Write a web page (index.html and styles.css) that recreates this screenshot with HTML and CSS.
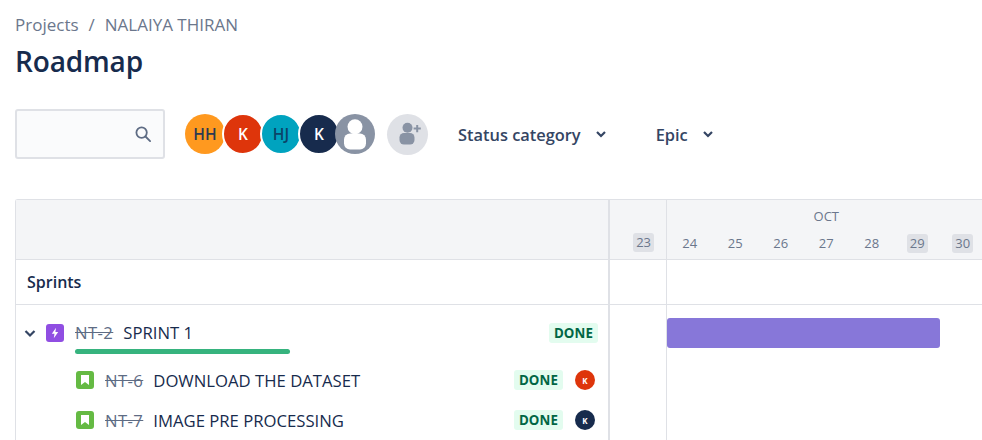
FILE: index.html
```html
<!DOCTYPE html>
<html lang="en">
<head>
<meta charset="utf-8">
<title>Roadmap</title>
<link rel="stylesheet" href="styles.css">
</head>
<body>
<main class="page">
  <nav class="crumbs"><span>Projects</span><span class="slash">/</span><span>NALAIYA THIRAN</span></nav>
  <h1 class="title">Roadmap</h1>
  <div class="toolbar">
    <div class="search">
      <svg class="search-icon" width="18" height="18" viewBox="0 0 18 18" fill="none" stroke="#5e6c84" stroke-width="1.8"><circle cx="7.6" cy="7.6" r="5.2"/><path d="M11.5 11.5l4.6 4.6" stroke-linecap="round"/></svg>
    </div>
    <div class="avatars">
      <span class="av av-hh">HH</span>
      <span class="av av-k1">K</span>
      <span class="av av-hj">HJ</span>
      <span class="av av-k2">K</span>
      <span class="av av-none">
        <svg width="40" height="40" viewBox="0 0 40 40"><circle cx="20" cy="20" r="20" fill="#8993a4"/><circle cx="20" cy="12.800" r="7.500" fill="#fff"/><rect x="9" y="19.500" width="22" height="16" rx="6" fill="#fff"/></svg>
      </span>
    </div>
    <span class="add">
      <svg width="30" height="30" viewBox="0 0 30 30" fill="#8993a4"><circle cx="14.500" cy="8.700" r="5"/><rect x="6.500" y="14" width="15" height="11.500" rx="4.500"/><path d="M23.200 6h2v2.600h2.600v2h-2.600v2.600h-2v-2.600h-2.600v-2h2.600z"/></svg>
    </span>
    <button class="filter">Status category<svg class="chev" width="12" height="12" viewBox="0 0 12 12" fill="none" stroke="#344563" stroke-width="2.200"><path d="M2 4l4 4 4-4"/></svg></button>
    <button class="filter filter-epic">Epic<svg class="chev" width="12" height="12" viewBox="0 0 12 12" fill="none" stroke="#344563" stroke-width="2.200"><path d="M2 4l4 4 4-4"/></svg></button>
  </div>
  <section class="chart">
    <div class="side">
      <div class="side-head"></div>
      <div class="sprints">Sprints</div>
      <div class="row row-epic">
        <svg class="chev-row" width="12" height="12" viewBox="0 0 12 12" fill="none" stroke="#344563" stroke-width="2.200"><path d="M1.500 4l4.500 4.500L10.500 4"/></svg>
        <svg class="type" width="18" height="18" viewBox="0 0 18 18"><rect width="18" height="18" rx="3" fill="#904ee2"/><path d="M10 3.800L5.800 9.800h2.700L7.800 14.200l4.400-6.200H9.400z" fill="#fff"/></svg>
        <div class="epic-main">
          <div class="label"><s class="key">NT-2</s><span class="name">SPRINT 1</span></div>
          <div class="progress"></div>
        </div>
        <span class="lozenge">DONE</span>
      </div>
      <div class="row row-story">
        <svg class="type" width="18" height="18" viewBox="0 0 18 18"><rect width="18" height="18" rx="3" fill="#65ba43"/><path d="M5 4h8v10l-4-3-4 3z" fill="#fff"/></svg>
        <div class="label"><s class="key">NT-6</s><span class="name">DOWNLOAD THE DATASET</span></div>
        <span class="lozenge">DONE</span>
        <span class="mini mini-red">K</span>
      </div>
      <div class="row row-story">
        <svg class="type" width="18" height="18" viewBox="0 0 18 18"><rect width="18" height="18" rx="3" fill="#65ba43"/><path d="M5 4h8v10l-4-3-4 3z" fill="#fff"/></svg>
        <div class="label"><s class="key">NT-7</s><span class="name">IMAGE PRE PROCESSING</span></div>
        <span class="lozenge">DONE</span>
        <span class="mini mini-navy">K</span>
      </div>
    </div>
    <div class="time">
      <div class="time-head">
        <div class="col-prev"><span class="day day-mark">23</span></div>
        <div class="month">
          <div class="month-name">OCT</div>
          <div class="days">
            <span class="day">24</span><span class="day">25</span><span class="day">26</span><span class="day">27</span><span class="day">28</span><span class="day day-mark">29</span><span class="day day-mark">30</span>
          </div>
        </div>
      </div>
      <div class="time-body">
        <div class="col-blank"></div>
        <div class="track">
          <div class="track-top"></div>
          <div class="bar"></div>
        </div>
      </div>
    </div>
  </section>
</main>
</body>
</html>
```
FILE: styles.css
```css
* { box-sizing: border-box; }
html, body { margin: 0; height: 440px; overflow: hidden; background: #fff; }
body { font-family: "Open Sans", "Noto Sans", "Liberation Sans", sans-serif; color: #172b4d; }
.page { padding: 12px 0 0 15px; width: 982px; }

.crumbs { display: flex; height: 24px; align-items: center; font-size: 17px; color: #6b778c; }
.slash { margin: 0 10px; }
.title { margin: 5px 0 0; font-size: 28px; line-height: 40px; font-weight: 600; color: #172b4d; letter-spacing: -0.15px; }

.toolbar { display: flex; align-items: center; margin-top: 28px; height: 50px; }
.search { width: 150px; height: 50px; background: #fafbfc; border: 2px solid #dfe1e6; border-radius: 3px; display: flex; align-items: center; justify-content: flex-end; padding-right: 11px; }
.avatars { display: flex; margin-left: 20px; }
.av { width: 40px; height: 40px; border-radius: 50%; display: flex; align-items: center; justify-content: center; font-size: 15.500px; font-weight: 600; color: #fff; flex: none; margin-right: -2px; outline: 2px solid #fff; outline-offset: -1px; }
.av-hh { background: #ff991f; color: #2c3a52; outline: none; }
.av-k1 { background: #de350b; }
.av-hj { background: #00a3bf; color: #0b4468; }
.av-k2 { background: #172b4d; }
.av-none { background: none; margin-left: -2px; margin-right: 0; outline: none; }
.av svg { display: block; }
.add { width: 41px; height: 41px; border-radius: 50%; background: #dfe1e6; margin-left: 12px; display: flex; align-items: center; justify-content: center; }
.filter { border: 0; background: none; padding: 0; margin-left: 30px; font: 600 16.400px "Open Sans", "Noto Sans", sans-serif; color: #344563; display: flex; align-items: center; gap: 14px; }
.filter-epic { margin-left: 49px; }

.chart { display: flex; margin-top: 40px; border-top: 1px solid #dfe1e6; border-left: 1px solid #dfe1e6; border-radius: 3px 0 0 0; height: 241px; }
.side { width: 594px; flex: none; border-right: 2px solid #dfe1e6; }
.side-head { height: 60px; background: #f4f5f7; border-bottom: 1px solid #dfe1e6; }
.sprints { height: 45px; border-bottom: 1px solid #dfe1e6; padding-left: 11px; display: flex; align-items: center; font-size: 16px; font-weight: 600; color: #172b4d; }
.row { display: flex; align-items: center; padding-right: 13px; }
.row-epic { height: 60px; padding-left: 8px; padding-bottom: 4px; padding-right: 10px; }
.chev-row { margin-right: 10px; flex: none; }
.type { flex: none; }
.epic-main { margin-left: 11px; flex: 1; align-self: flex-start; padding-top: 17px; }
.label { display: flex; align-items: center; font-size: 16.700px; line-height: 22px; color: #172b4d; white-space: nowrap; }
.key { color: #5e6c84; margin-right: 10px; letter-spacing: 0.4px; }
.progress { width: 215px; height: 5px; background: #36b37e; border-radius: 3px; margin-top: 5px; }
.lozenge { background: #e3fcef; color: #006644; font-size: 13.300px; font-weight: 700; line-height: 20px; padding: 0 5px; border-radius: 3px; letter-spacing: 0.1px; }
.row-story { height: 40px; padding-left: 60px; margin-top: -5px; }
.row-story + .row-story { margin-top: 0; }
.row-story .label { margin-left: 11px; flex: 1; padding-top: 2px; }
.mini { width: 20px; height: 20px; border-radius: 50%; color: #fff; font-size: 8px; font-weight: 700; display: flex; align-items: center; justify-content: center; margin-left: 12px; flex: none; }
.mini-red { background: #de350b; }
.mini-navy { background: #172b4d; }

.time { flex: 1; min-width: 0; }
.time-head { display: flex; height: 60px; background: #f4f5f7; border-bottom: 1px solid #dfe1e6; }
.col-prev { width: 57px; flex: none; display: flex; justify-content: flex-end; align-items: flex-end; padding: 0 12px 7px 0; border-right: 1px solid #dfe1e6; }
.month { flex: 1; min-width: 0; }
.month-name { width: 318.500px; text-align: center; font-size: 13px; line-height: 17px; margin-top: 8px; color: #6b778c; }
.days { display: grid; grid-template-columns: repeat(7, 45.500px); margin-top: 9px; justify-items: center; }
.day { font-size: 13px; line-height: 19px; color: #6b778c; padding: 0 3px; border-radius: 3px; display: block; }
.day-mark { background: #dfe1e6; }
.time-body { display: flex; height: 180px; }
.col-blank { width: 57px; flex: none; border-right: 1px solid #dfe1e6; }
.track { flex: 1; }
.track-top { height: 45px; border-bottom: 1px solid #dfe1e6; margin-left: -57px; }
.bar { width: 273px; height: 30px; margin-top: 13px; background: #8777d9; border-radius: 3px; }
```
